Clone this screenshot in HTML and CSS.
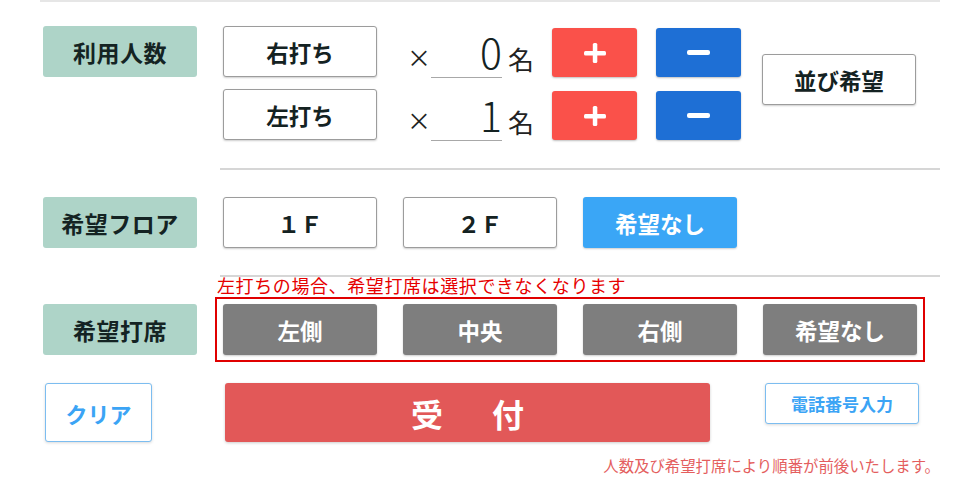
FILE: index.html
```html
<!DOCTYPE html>
<html lang="ja">
<head>
<meta charset="utf-8">
<title>受付</title>
<link rel="stylesheet" href="styles.css">
</head>
<body>
<div class="page">
  <div class="topline"></div>

  <section class="row count-section">
    <div class="label">利用人数</div>
    <div class="counts">
      <div class="count-row">
        <button class="btn white">右打ち</button>
        <span class="times">×</span>
        <span class="num">0</span>
        <span class="unit">名</span>
        <button class="sq plus"><svg width="22" height="20" viewBox="0 0 22 20"><rect x="0" y="8" width="22" height="4.5" rx="1.5" fill="#fff"/><rect x="8.8" y="0" width="4.5" height="20" rx="1.5" fill="#fff"/></svg></button>
        <button class="sq minus"><svg width="23" height="5" viewBox="0 0 23 5"><rect x="0" y="0" width="23" height="5" rx="2" fill="#fff"/></svg></button>
      </div>
      <div class="count-row">
        <button class="btn white">左打ち</button>
        <span class="times">×</span>
        <span class="num">1</span>
        <span class="unit">名</span>
        <button class="sq plus"><svg width="22" height="20" viewBox="0 0 22 20"><rect x="0" y="8" width="22" height="4.5" rx="1.5" fill="#fff"/><rect x="8.8" y="0" width="4.5" height="20" rx="1.5" fill="#fff"/></svg></button>
        <button class="sq minus"><svg width="23" height="5" viewBox="0 0 23 5"><rect x="0" y="0" width="23" height="5" rx="2" fill="#fff"/></svg></button>
      </div>
    </div>
    <button class="btn white narabi">並び希望</button>
  </section>

  <div class="divider"></div>

  <section class="row floor-section">
    <div class="label">希望フロア</div>
    <div class="opts">
      <button class="btn white">１Ｆ</button>
      <button class="btn white">２Ｆ</button>
      <button class="btn blue">希望なし</button>
    </div>
  </section>

  <div class="divider"></div>

  <section class="row seat-section">
    <div class="label seat-label">希望打席</div>
    <div class="seat-col">
      <div class="note">左打ちの場合、希望打席は選択できなくなります</div>
      <div class="seat-box">
        <button class="btn gray">左側</button>
        <button class="btn gray">中央</button>
        <button class="btn gray">右側</button>
        <button class="btn gray">希望なし</button>
      </div>
    </div>
  </section>

  <section class="row action-section">
    <button class="btn outline clear">クリア</button>
    <button class="btn submit"><span>受</span><span>付</span></button>
    <button class="btn outline tel">電話番号入力</button>
  </section>

  <p class="footnote">人数及び希望打席により順番が前後いたします。</p>
</div>
</body>
</html>
```

FILE: styles.css
```css
* { box-sizing: border-box; }
html, body { margin: 0; padding: 0; background: #fff; }
body {
  font-family: "Noto Sans CJK JP", "Noto Sans", sans-serif;
  color: #142222;
  width: 980px;
  height: 496px;
  overflow: hidden;
}
.page { width: 980px; }
.topline {
  margin-left: 40px;
  width: 900px;
  height: 2px;
  background: #e6e6e6;
}
.row { display: flex; padding-left: 43px; }
.label {
  width: 154px;
  height: 51px;
  background: #aed4c8;
  border-radius: 3px;
  display: flex;
  align-items: center;
  justify-content: center;
  font-weight: 700;
  font-size: 23px;
  letter-spacing: 0.5px;
  color: #142323;
  flex: none;
}
.btn {
  font-family: inherit;
  border: none;
  padding: 0;
  margin: 0;
  display: flex;
  align-items: center;
  justify-content: center;
  font-weight: 700;
  font-size: 22.5px;
  border-radius: 3px;
  flex: none;
  width: 154px;
  height: 51px;
  cursor: pointer;
}
.btn.white {
  background: #fff;
  border: 1px solid #9c9c9c;
  color: #142222;
  box-shadow: 0 1px 2px rgba(0,0,0,0.2);
}
.btn.blue {
  background: #3aa6f6;
  color: #fff;
  box-shadow: 0 1px 2px rgba(0,0,0,0.2);
}
.btn.gray {
  background: #7e7e7e;
  color: #fff;
  box-shadow: 0 1px 2px rgba(0,0,0,0.2);
}

/* count section */
.count-section { margin-top: 24px; }
.counts {
  margin-left: 26px;
  display: flex;
  flex-direction: column;
  gap: 12px;
}
.count-row { display: flex; height: 51px; align-items: center; }
.times {
  margin-left: 30px;
  width: 16px;
  font-size: 24px;
  line-height: 1;
  margin-top: 10px;
  color: #222;
}
.num {
  margin-left: 8px;
  width: 71px;
  align-self: stretch;
  border-bottom: 1.5px solid #a8a8a8;
  text-align: right;
  font-size: 41px;
  font-weight: 300;
  line-height: 51px;
  padding-right: 0;
  color: #142222;
  height: 52px;
}
.unit {
  margin-left: 6px;
  width: 26px;
  font-size: 26px;
  line-height: 1;
  margin-top: 14px;
  color: #222;
}
.sq {
  border: none;
  padding: 0;
  width: 85px;
  height: 49px;
  border-radius: 3px;
  align-self: flex-end;
  display: flex;
  align-items: center;
  justify-content: center;
  box-shadow: 0 1px 2px rgba(0,0,0,0.25);
  flex: none;
}
.plus { margin-left: 18px; background: #fa514a; }
.minus { margin-left: 19px; background: #1e6fd5; }
.narabi { margin-left: 21px; margin-top: 28px; }

.divider {
  margin-left: 220px;
  width: 720px;
  height: 2px;
  background: #d6d6d6;
}
.count-section + .divider { margin-top: 28px; }

/* floor */
.floor-section { margin-top: 27px; }
.opts { display: flex; gap: 26px; margin-left: 26px; }
.floor-section + .divider { margin-top: 27px; }

/* seat */
.seat-label { margin-top: 27px; }
.seat-col { margin-left: 18px; display: flex; flex-direction: column; }
.note {
  color: #e60000;
  font-size: 18px;
  line-height: 15px;
  height: 20px;
  padding-top: 1px;
  padding-left: 2px;
  letter-spacing: 0.6px;
  white-space: nowrap;
}
.seat-box {
  border: 2px solid #e00000;
  padding: 5px 6px;
  display: flex;
  gap: 26px;
}

/* actions */
.action-section { margin-top: 21px; align-items: flex-start; }
.btn.outline {
  background: #fff;
  border: 1.5px solid #7cbdf0;
  color: #3ba4f5;
  box-shadow: 0 1px 3px rgba(0,0,0,0.15);
}
.clear { margin-left: 2px; width: 107px; height: 59px; font-size: 22px; }
.submit {
  margin-left: 73px;
  width: 485px;
  height: 59px;
  background: #e25858;
  color: #fff;
  font-size: 32px;
  gap: 49px;
  box-shadow: 0 1px 3px rgba(0,0,0,0.2);
}
.tel { margin-left: 55px; width: 154px; height: 41px; font-size: 17px; }

.footnote {
  margin: 13px 0 0;
  padding-right: 40px;
  text-align: right;
  font-size: 15.4px;
  line-height: 20px;
  color: #e45e5e;
}
```
